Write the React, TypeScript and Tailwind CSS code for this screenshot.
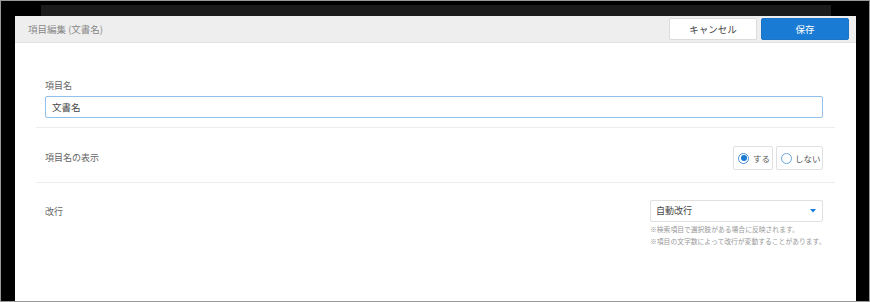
import React from "react";

const font = { fontFamily: '"Noto Sans CJK JP", "Noto Sans", sans-serif' };

export default function App() {
  return (
    <div
      className="w-[870px] h-[302px] bg-black border border-[#9a9a9a] flex flex-col pt-[4px] overflow-hidden"
      style={font}
    >
      <div className="ml-[40px] w-[790px] h-[11px] bg-[#1b1b1b] shrink-0" />
      <div className="ml-[14px] w-[841px] flex-1 bg-white flex flex-col">
        <div className="h-[27px] bg-[#eeeeee] border-b border-[#e2e2e2] flex items-center justify-between pl-[13px] pr-[7px]">
          <span className="text-[9.5px] text-[#888]">項目編集 (文書名)</span>
          <div className="flex gap-[4px]">
            <button className="w-[88px] h-[22px] bg-white border border-[#dcdcdc] rounded-[2px] text-[9.5px] text-[#444]">
              キャンセル
            </button>
            <button className="w-[88px] h-[22px] bg-[#1a7bd4] border border-[#1a74c8] rounded-[2px] text-[9.5px] text-white">
              保存
            </button>
          </div>
        </div>
        <div className="mx-[21px] border-b border-[#ececec] pl-[9px] pr-[12px] pt-[37px] pb-[9px]">
          <div className="text-[9px] text-[#666] leading-[12px] mb-[4px]">項目名</div>
          <div className="h-[22px] border border-[#92c0ea] rounded-[2px] flex items-center px-[6px] text-[9.5px] text-[#444]">
            文書名
          </div>
        </div>
        <div className="mx-[21px] border-b border-[#ececec] pl-[9px] pr-[12px] pt-[18px] pb-[12px] flex items-center justify-between">
          <span className="text-[9px] text-[#666]">項目名の表示</span>
          <div className="flex gap-[3px]">
            <div className="h-[24px] w-[40px] border border-[#e0e0e0] rounded-[2px] flex items-center pl-[4px] gap-[4px] whitespace-nowrap">
              <span className="w-[11px] h-[11px] shrink-0 rounded-full border border-[#4a90d9] flex items-center justify-center">
                <span className="w-[6px] h-[6px] rounded-full bg-[#1a7bd4]" />
              </span>
              <span className="text-[8.5px] text-[#555]">する</span>
            </div>
            <div className="h-[24px] w-[47px] border border-[#e0e0e0] rounded-[2px] flex items-center pl-[4px] gap-[3px] whitespace-nowrap">
              <span className="w-[11px] h-[11px] shrink-0 rounded-full border border-[#6aa6e0]" />
              <span className="text-[8.5px] text-[#555]">しない</span>
            </div>
          </div>
        </div>
        <div className="mx-[21px] pl-[9px] pr-[12px] pt-[17px] flex justify-between">
          <span className="text-[9px] text-[#666] mt-[5px]">改行</span>
          <div className="w-[173px]">
            <div className="h-[22px] border border-[#e0e0e0] rounded-[2px] flex items-center justify-between pl-[5px] pr-[6px]">
              <span className="text-[9px] text-[#444]">自動改行</span>
              <svg width="6" height="4" viewBox="0 0 6 4">
                <path d="M0 0 L6 0 L3 3.5 Z" fill="#1a7bd4" />
              </svg>
            </div>
            <div className="mt-[1px] text-[6.8px] leading-[12px] text-[#999] whitespace-nowrap">
              ※検索項目で選択肢がある場合に反映されます。
            </div>
            <div className="text-[6.8px] leading-[12px] text-[#999] whitespace-nowrap">
              ※項目の文字数によって改行が変動することがあります。
            </div>
          </div>
        </div>
      </div>
    </div>
  );
}
